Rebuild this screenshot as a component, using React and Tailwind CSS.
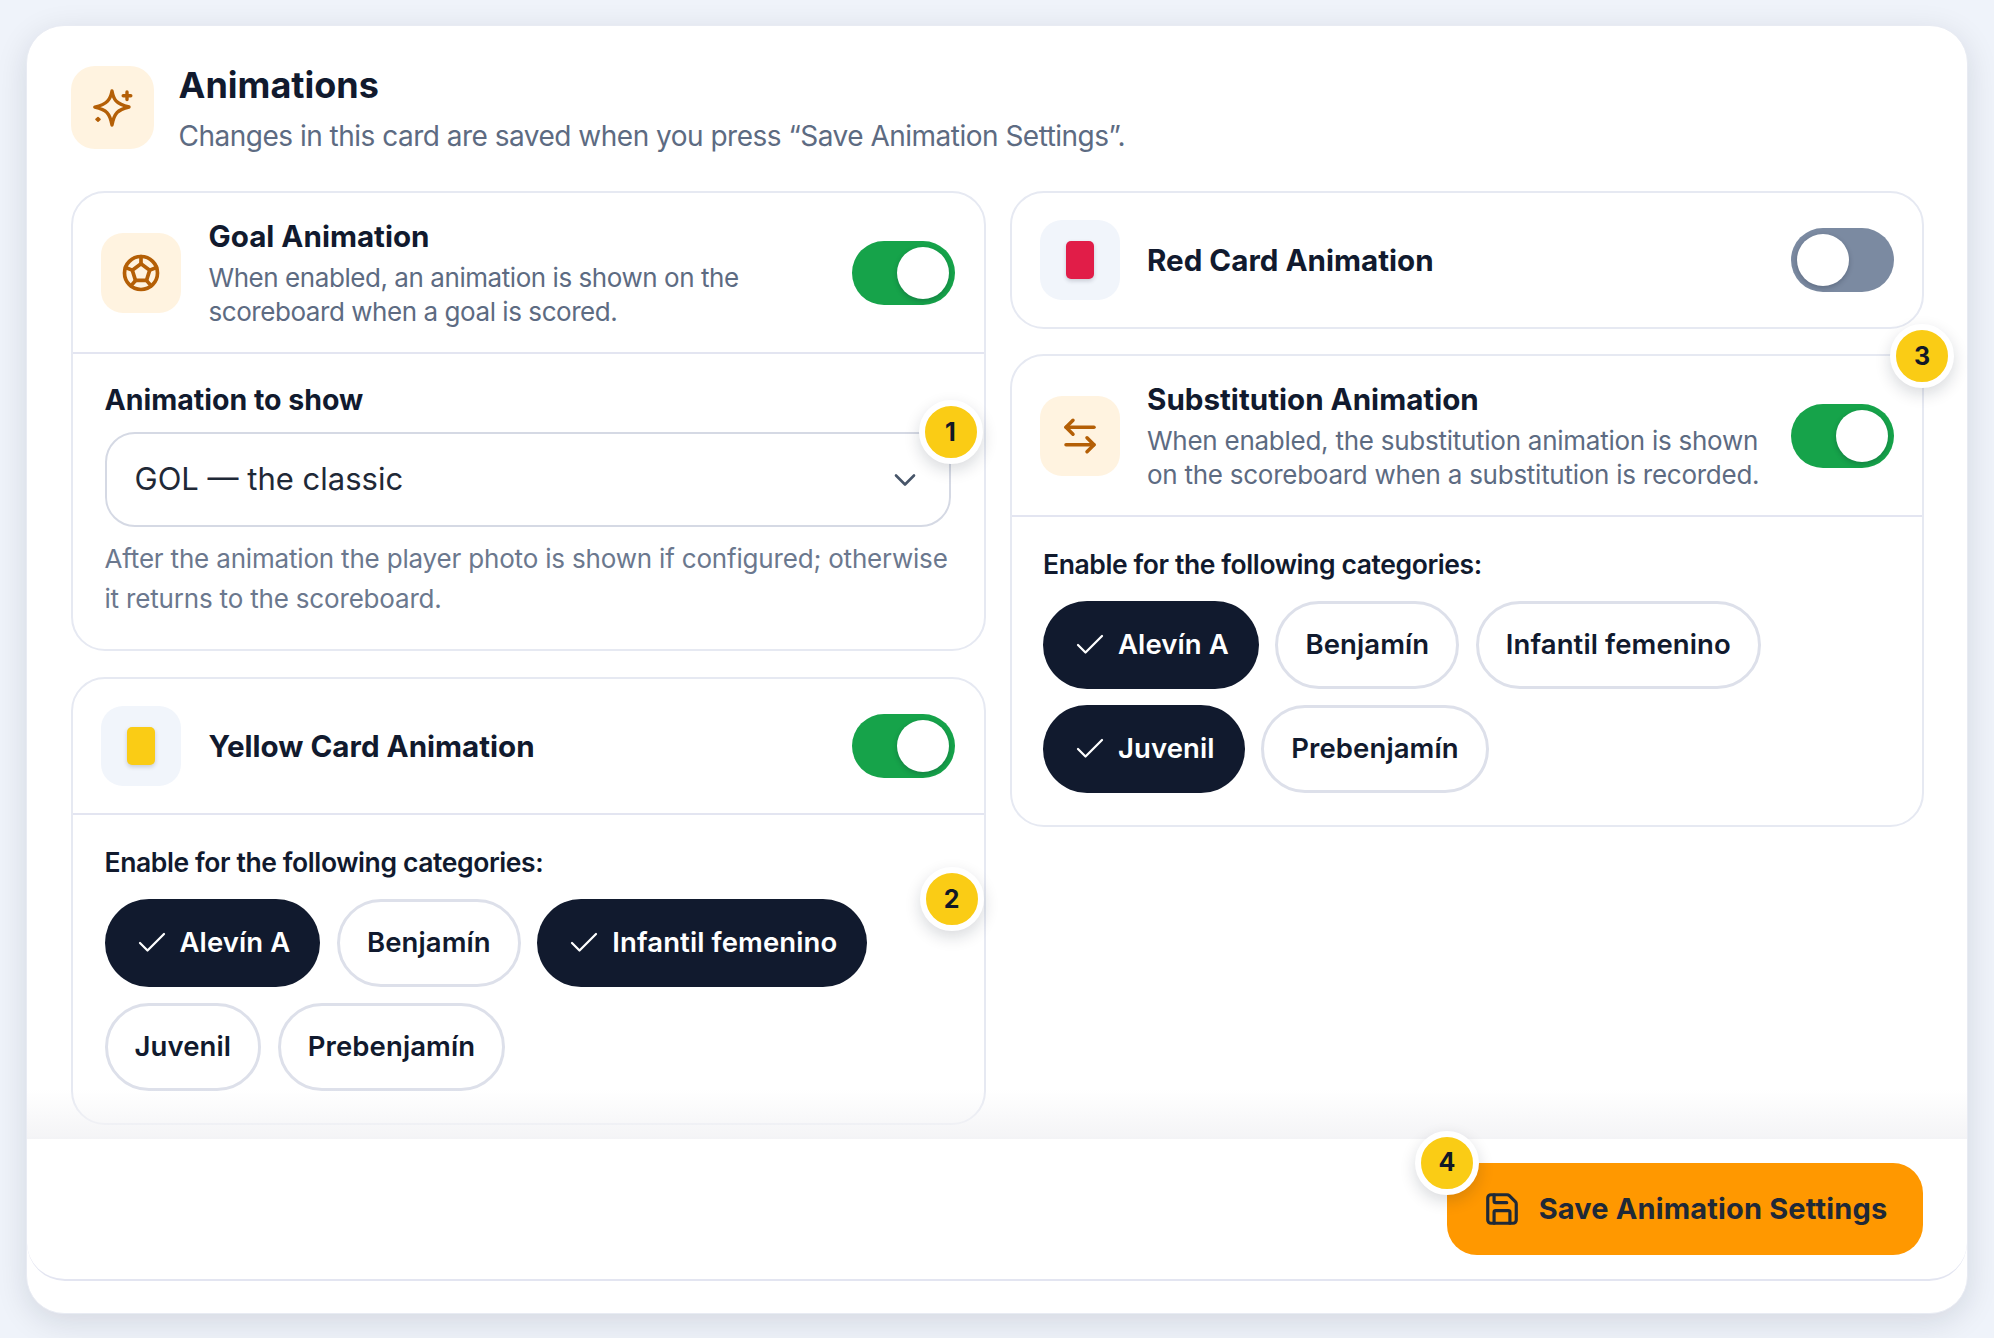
import React from "react";
import { ArrowLeftRight, Check, ChevronDown, Save } from "lucide-react";
import { TbBallFootball } from "react-icons/tb";

function SparkIcon() {
  return (
    <svg width="44" height="44" viewBox="-22 -22 44 44" fill="none" stroke="#b45f06" strokeWidth="3.4" strokeLinecap="round" strokeLinejoin="round">
      <path d="M0 -17 C1.6 -8.5 3.4 -4.6 17 -1 C5.4 1.8 2.2 5.2 0 17 C-2.2 5.2 -5.4 1.8 -17.2 -0.8 C-4.6 -3.8 -1.6 -8.5 0 -17 Z" />
      <path d="M15 -16 V-8.5 M11.2 -12.2 H18.8" />
      <path d="M-14 9.6 L-12 11.4 L-14 13.2 L-16 11.4 Z" fill="#b45f06" strokeWidth="1.6" />
    </svg>
  );
}

function Toggle({ on }) {
  return (
    <div className={`flex h-[64px] w-[103px] shrink-0 items-center rounded-full px-[6px] ${on ? "justify-end bg-[#16a34a]" : "justify-start bg-[#7b8aa1]"}`}>
      <div className="h-[52px] w-[52px] rounded-full bg-white shadow-[0_2px_5px_rgba(15,23,42,0.25)]" />
    </div>
  );
}

function Badge({ n, className }) {
  return (
    <div className={`absolute z-20 flex h-[64px] w-[64px] items-center justify-center rounded-full border-[6px] border-white bg-[#facc15] text-[25px] leading-none font-bold text-[#111827] shadow-[0_6px_16px_rgba(15,23,42,0.16)] ${className}`}>
      {n}
    </div>
  );
}

function Chip({ label, on }) {
  return on ? (
    <div className="flex h-[88px] items-center gap-[10px] rounded-full bg-[#111a2e] pr-[30px] pl-[29px] text-[27.5px] font-semibold tracking-[0.004em] text-white">
      <Check size={36} strokeWidth={1.5} />
      {label}
    </div>
  ) : (
    <div className="flex h-[88px] items-center rounded-full border-[3px] border-[#dde0ea] bg-white px-[27px] text-[27.5px] font-semibold tracking-[0.004em] text-[#111a2e]">
      {label}
    </div>
  );
}

function Chips({ items, badge }) {
  return (
    <div className="relative mt-[21px] flex flex-wrap gap-x-[16.5px] gap-y-[16px]">
      {items.map(([label, on]) => (
        <Chip key={label} label={label} on={on} />
      ))}
      {badge}
    </div>
  );
}

function IconBox({ warm, children }) {
  return (
    <div className={`flex h-[80px] w-[80px] shrink-0 items-center justify-center rounded-[22px] ${warm ? "bg-[#fff3e0]" : "bg-[#f1f5fb]"}`}>
      {children}
    </div>
  );
}

function PanelHead({ icon, warm, title, desc, on, className, descClass }) {
  return (
    <div className={`flex items-center pl-[28px] ${className}`}>
      <IconBox warm={warm}>{icon}</IconBox>
      <div className={`min-w-0 flex-1 ${desc ? "pt-[4px]" : ""}`}>
        <div className={`text-[29.6px] font-bold text-[#111a2e] ${desc ? "leading-[30px]" : "leading-[37px]"}`}>{title}</div>
        {desc && <div className={`mt-[10px] text-[26px] leading-[34px] whitespace-nowrap text-[#5d6b82] ${descClass}`}>{desc}</div>}
      </div>
      <Toggle on={on} />
    </div>
  );
}

function Panel({ children }) {
  return <div className="relative rounded-[34px] border-2 border-[#e6e9f2] bg-white">{children}</div>;
}

function CategoryBody({ items, badge, className }) {
  return (
    <div className={`pt-[31px] pb-[32px] ${className}`}>
      <div className="text-[26.5px] leading-[32px] font-semibold tracking-[-0.015em] text-[#111a2e]">Enable for the following categories:</div>
      <Chips items={items} badge={badge} />
    </div>
  );
}

export default function App() {
  return (
    <div className="h-[1338px] w-full overflow-hidden bg-[#eff3fa] px-[26px] pt-[25px] font-[Inter,sans-serif]">
      <div className="relative flex h-[1289px] w-[1942px] flex-col rounded-[38px] border border-[#e8ebf3] bg-white shadow-[0_8px_32px_rgba(15,23,42,0.12)]">
        <div className="flex-1 pt-[40px] pl-[43.5px]">
          <div className="flex items-start gap-[25px]">
            <div className="flex h-[83px] w-[83px] shrink-0 items-center justify-center rounded-[24px] bg-[#fff3e0]">
              <SparkIcon />
            </div>
            <div className="-mt-[3px]">
              <div className="text-[36px] leading-[44px] font-bold text-[#111a2e]">Animations</div>
              <div className="mt-[9px] text-[28px] leading-[40px] tracking-[-0.018em] text-[#5d6b82]">Changes in this card are saved when you press “Save Animation Settings”.</div>
            </div>
          </div>
          <div className="mt-[35px] grid grid-cols-[915.5px_914px] gap-x-[24px]">
            <div className="flex flex-col gap-[26px]">
              <Panel>
                <div className="border-b-2 border-[#e3e5f1]">
                  <PanelHead
                    warm
                    icon={<TbBallFootball size={44} color="#b45f06" />}
                    title="Goal Animation"
                    desc={<>When enabled, an animation is shown on the<br />scoreboard when a goal is scored.</>}
                    descClass="tracking-[-0.017em]"
                    on
                    className="h-[159px] gap-[28px] pr-[29px]"
                  />
                </div>
                <div className="px-[32px] pt-[30px] pb-[30px]">
                  <div className="text-[28.5px] leading-[32px] font-bold text-[#111a2e]">Animation to show</div>
                  <div className="relative mt-[16px] flex h-[95px] w-[846px] items-center justify-between rounded-[30px] border-2 border-[#d5d9e4] pr-[26px] pl-[28px] text-[31px] text-[#1f2937]">
                    <span>GOL — the classic</span>
                    <ChevronDown size={36} strokeWidth={1.75} color="#475569" />
                    <Badge n={1} className="-top-[2px] -right-[2px] translate-x-1/2 -translate-y-1/2" />
                  </div>
                  <div className="mt-[12px] text-[26px] leading-[40px] tracking-[-0.007em] text-[#6b788e]">
                    After the animation the player photo is shown if configured; otherwise<br />it returns to the scoreboard.
                  </div>
                </div>
              </Panel>
              <Panel>
                <div className="border-b-2 border-[#e3e5f1]">
                  <PanelHead
                    icon={<div className="h-[38px] w-[28px] rounded-[5px] bg-[#facc15] shadow-[0_2px_4px_rgba(15,23,42,0.18)]" />}
                    title="Yellow Card Animation"
                    on
                    className="h-[134px] gap-[28px] pr-[29px]"
                  />
                </div>
                <CategoryBody
                  className="px-[32px]"
                  items={[["Alevín A", true], ["Benjamín", false], ["Infantil femenino", true], ["Juvenil", false], ["Prebenjamín", false]]}
                  badge={<Badge n={2} className="top-0 left-[847px] -translate-x-1/2 -translate-y-1/2" />}
                />
              </Panel>
            </div>
            <div className="flex flex-col gap-[25px] self-start">
              <Panel>
                <PanelHead
                  icon={<div className="h-[38px] w-[28px] rounded-[5px] bg-[#e11d48] shadow-[0_2px_4px_rgba(15,23,42,0.18)]" />}
                  title="Red Card Animation"
                  on={false}
                  className="h-[134px] gap-[27px] pr-[28px]"
                />
              </Panel>
              <Panel>
                <Badge n={3} className="top-0 right-0 translate-x-1/2 -translate-y-1/2" />
                <div className="border-b-2 border-[#e3e5f1]">
                  <PanelHead
                    warm
                    icon={<ArrowLeftRight size={42} strokeWidth={2} color="#b45f06" />}
                    title="Substitution Animation"
                    desc={<>When enabled, the substitution animation is shown<br />on the scoreboard when a substitution is recorded.</>}
                    descClass="tracking-[-0.01em]"
                    on
                    className="h-[159px] gap-[27px] pr-[28px]"
                  />
                </div>
                <CategoryBody className="pr-[32px] pl-[31px]" items={[["Alevín A", true], ["Benjamín", false], ["Infantil femenino", false], ["Juvenil", true], ["Prebenjamín", false]]} />
              </Panel>
            </div>
          </div>
        </div>
        <div className="relative mb-[32px] flex h-[144px] items-center justify-end rounded-b-[38px] border-y-2 border-[#e3e5f1] bg-white pr-[44px] pb-[1px]">
          <div className="absolute inset-x-0 bottom-full h-[50px] bg-gradient-to-b from-white/0 to-[#f4f4f6]" />
          <div className="relative flex h-[92px] w-[476px] items-center justify-center gap-[18px] rounded-[30px] bg-[#ff9800] text-[29px] font-bold tracking-[0.005em] text-[#1f2937]">
            <Save size={38} strokeWidth={2} />
            Save Animation Settings
            <Badge n={4} className="top-0 left-0 -translate-x-1/2 -translate-y-1/2" />
          </div>
        </div>
      </div>
    </div>
  );
}
